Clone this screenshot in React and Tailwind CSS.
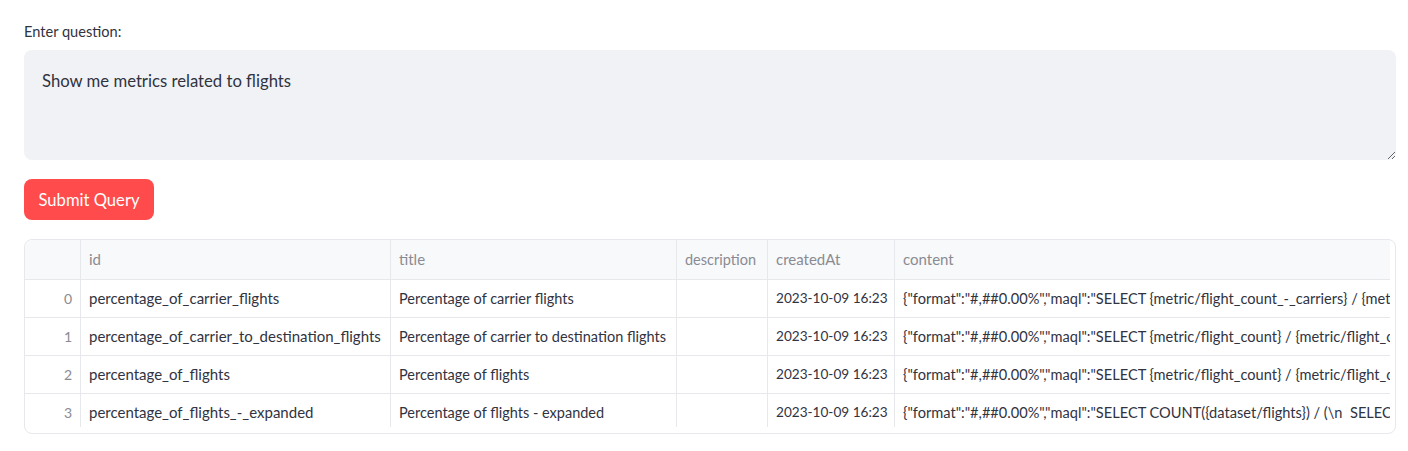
import React from "react";

const rows = [
  {
    i: 0,
    id: "percentage_of_carrier_flights",
    title: "Percentage of carrier flights",
    createdAt: "2023-10-09 16:23",
    content:
      '{"format":"#,##0.00%","maql":"SELECT {metric/flight_count_-_carriers} / {metric/flight_count} BY ALL OTHER"}',
  },
  {
    i: 1,
    id: "percentage_of_carrier_to_destination_flights",
    title: "Percentage of carrier to destination flights",
    createdAt: "2023-10-09 16:23",
    content:
      '{"format":"#,##0.00%","maql":"SELECT {metric/flight_count} / {metric/flight_count_-_destinations}"}',
  },
  {
    i: 2,
    id: "percentage_of_flights",
    title: "Percentage of flights",
    createdAt: "2023-10-09 16:23",
    content:
      '{"format":"#,##0.00%","maql":"SELECT {metric/flight_count} / {metric/flight_count_-_all}"}',
  },
  {
    i: 3,
    id: "percentage_of_flights_-_expanded",
    title: "Percentage of flights - expanded",
    createdAt: "2023-10-09 16:23",
    content:
      '{"format":"#,##0.00%","maql":"SELECT COUNT({dataset/flights}) / (\\n  SELECT COUNT({dataset/flights}) BY ALL OTHER\\n)"}',
  },
];

const grid =
  "grid grid-cols-[56px_310px_286px_91px_127px_900px] w-[1770px]";

export default function App() {
  return (
    <div
      className="w-[1408px] h-[451px] bg-white text-[#31333f] pl-[24px] pr-[12px] pt-[22px]"
      style={{ fontFamily: '"Source Sans Pro", Lato, "Liberation Sans", sans-serif' }}
    >
      <div className="text-[14.6px] leading-[20px]">Enter question:</div>
      <textarea
        className="mt-[8px] block w-full h-[110px] bg-[#f0f2f6] rounded-[8px] pl-[18px] pr-[18px] pt-[19px] text-[16.7px] leading-[24px] text-[#31333f] outline-none border-0"
        defaultValue="Show me metrics related to flights"
      />
      <button className="mt-[19px] block h-[41px] w-[130px] rounded-[8px] bg-[#ff4b4b] text-white text-[16.6px] leading-[24px]">
        Submit Query
      </button>
      <div className="mt-[19px] h-[195px] rounded-[8px] border border-[#e6e8ec] pr-[5px] pb-[6px] overflow-hidden">
        <div className="h-full w-full overflow-hidden rounded-tl-[7px] text-[15px]">
          <div className={`${grid} h-[40px] bg-[#f8f9fb] border-b border-[#e6e8ec] text-[#8a8b92]`}>
            <div className="border-r border-[#e6e8ec]" />
            <div className="border-r border-[#e6e8ec] px-2 flex items-center">id</div>
            <div className="border-r border-[#e6e8ec] px-2 flex items-center">title</div>
            <div className="border-r border-[#e6e8ec] px-2 flex items-center whitespace-nowrap overflow-hidden text-[14.5px]">description</div>
            <div className="border-r border-[#e6e8ec] px-2 flex items-center">createdAt</div>
            <div className="px-2 flex items-center">content</div>
          </div>
          {rows.map((r) => (
            <div
              key={r.i}
              className={`${grid} h-[38px] border-b border-[#e6e8ec] text-[#31333f]`}
            >
              <div className="border-r border-[#e6e8ec] px-2 flex items-center justify-end text-[#8a8b92] text-[14px]">
                {r.i}
              </div>
              <div className="border-r border-[#e6e8ec] px-2 flex items-center whitespace-nowrap overflow-hidden">
                {r.id}
              </div>
              <div className="border-r border-[#e6e8ec] px-2 flex items-center whitespace-nowrap overflow-hidden text-[14.5px]">
                {r.title}
              </div>
              <div className="border-r border-[#e6e8ec] px-2" />
              <div className="border-r border-[#e6e8ec] px-2 flex items-center whitespace-nowrap overflow-hidden text-[13.6px]">
                {r.createdAt}
              </div>
              <div className="px-2 flex items-center whitespace-pre overflow-hidden text-[14.6px]">
                {r.content}
              </div>
            </div>
          ))}
        </div>
      </div>
    </div>
  );
}
